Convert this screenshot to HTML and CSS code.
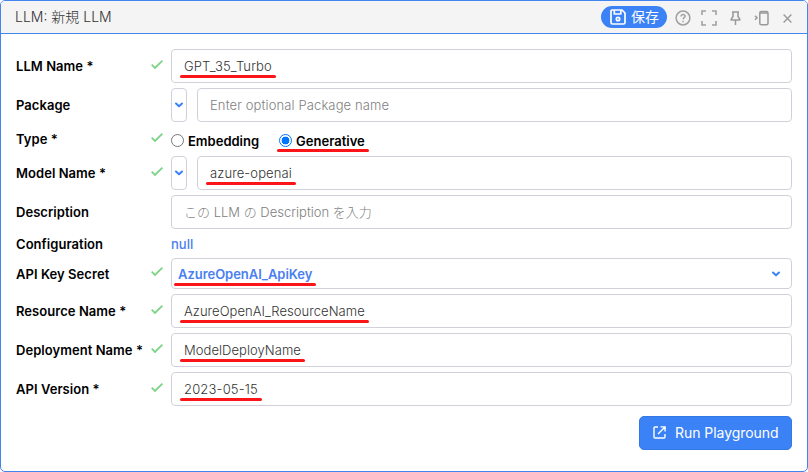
FILE: index.html
```html
<!DOCTYPE html>
<html lang="ja">
<head>
<meta charset="utf-8">
<title>LLM: 新規 LLM</title>
<link rel="stylesheet" href="styles.css">
</head>
<body>
<svg class="defs" aria-hidden="true">
  <symbol id="check" viewBox="0 0 12 9"><path d="M.7 4.7 4 8 11.4.7" fill="none" stroke="#7dd488" stroke-width="1.8"/></symbol>
  <symbol id="chevron" viewBox="0 0 8 6"><path d="M1 1.500 4 4.300 7 1.500" fill="none" stroke="currentColor" stroke-width="2" stroke-linecap="round" stroke-linejoin="round"/></symbol>
</svg>
<main class="panel">
  <header class="header">
    <h1 class="title">LLM: 新規 LLM</h1>
    <button class="save">
      <svg width="16" height="16" viewBox="0 0 16 16" fill="none" stroke="#fff" stroke-width="1.7" stroke-linejoin="round"><path d="M2 1h10l3 3v9.500a1.500 1.500 0 0 1-1.500 1.500h-11A1.500 1.500 0 0 1 1 13.500V2a1 1 0 0 1 1-1Z"/><path d="M4.300 1v4h6.500V1"/><circle cx="8" cy="10" r="1.700"/></svg>
      <span>保存</span>
    </button>
    <nav class="tools">
      <svg class="help" width="16" height="16" viewBox="0 0 16 16" fill="none" stroke="#a0a0a0" stroke-width="1.500"><circle cx="8" cy="8" r="6.900"/><path d="M6 6.500C6 3.700 10.200 4 10.100 6.300 10 7.700 8.100 7.600 8.100 9.300M8.100 10.700v1.500"/></svg>
      <svg class="expand" width="16" height="16" viewBox="0 0 16 16" fill="none" stroke="#a0a0a0" stroke-width="1.600"><path d="M1 5V1h4M11 1h4v4M15 11v4h-4M5 15H1v-4"/></svg>
      <svg class="pin" width="11" height="14" viewBox="0 0 11 14" fill="none" stroke="#999" stroke-width="1.500"><path d="M2 1h7M3 1v4.500L1.300 8v1h8.400V8L8 5.500V1M5.500 9v5"/></svg>
      <svg class="dock" width="15" height="16" viewBox="0 0 15 16" fill="none" stroke="#999" stroke-width="1.500"><path d="m1 5.800 2 2-2 2"/><rect x="5.800" y="1.500" width="8.200" height="13.300" rx="1.500"/><path d="M5.800 3h8.200"/></svg>
      <svg class="close" width="9" height="9" viewBox="0 0 9 9" fill="none" stroke="#999" stroke-width="1.400"><path d="m.6.600 7.800 7.800M8.400.6.600 8.400"/></svg>
    </nav>
  </header>
  <form class="form">
    <div class="row">
      <label class="label">LLM Name *</label><svg class="check"><use href="#check"/></svg>
      <div class="field"><span class="value mark">GPT_35_Turbo</span></div>
    </div>
    <div class="row">
      <label class="label">Package</label><span></span>
      <div class="combo"><div class="drop"><svg class="chev"><use href="#chevron"/></svg></div><div class="field"><span class="hint wide">Enter optional Package name</span></div></div>
    </div>
    <div class="row row-type">
      <label class="label">Type *</label><svg class="check"><use href="#check"/></svg>
      <div class="radios">
        <span class="option"><i class="radio"></i>Embedding</span>
        <span class="option mark chosen"><i class="radio on"></i>Generative</span>
      </div>
    </div>
    <div class="row">
      <label class="label">Model Name *</label><svg class="check"><use href="#check"/></svg>
      <div class="combo"><div class="drop"><svg class="chev"><use href="#chevron"/></svg></div><div class="field"><span class="value mark">azure-openai</span></div></div>
    </div>
    <div class="row">
      <label class="label">Description</label><span></span>
      <div class="field"><span class="hint">この LLM の Description を入力</span></div>
    </div>
    <div class="row row-config">
      <label class="label">Configuration</label><span></span>
      <span class="null">null</span>
    </div>
    <div class="row row-select">
      <label class="label">API Key Secret</label><svg class="check"><use href="#check"/></svg>
      <div class="field select"><span class="key mark">AzureOpenAI_ApiKey</span><svg class="chev"><use href="#chevron"/></svg></div>
    </div>
    <div class="row">
      <label class="label">Resource Name *</label><svg class="check"><use href="#check"/></svg>
      <div class="field"><span class="value mark tight">AzureOpenAI_ResourceName</span></div>
    </div>
    <div class="row">
      <label class="label">Deployment Name *</label><svg class="check"><use href="#check"/></svg>
      <div class="field"><span class="value mark tight">ModelDeployName</span></div>
    </div>
    <div class="row">
      <label class="label">API Version *</label><svg class="check"><use href="#check"/></svg>
      <div class="field"><span class="value mark wide">2023-05-15</span></div>
    </div>
    <button class="run" type="button">
      <svg width="13" height="13" viewBox="0 0 13 13" fill="none" stroke="#fff" stroke-width="1.400"><path d="M5 1H2a1 1 0 0 0-1 1v9a1 1 0 0 0 1 1h9a1 1 0 0 0 1-1V8M7.500.9h4.600v4.600M12 1 5 8"/></svg>
      <span>Run Playground</span>
    </button>
  </form>
</main>
</body>
</html>
```

FILE: styles.css
```css
* { box-sizing: border-box; }
body { margin: 0; background: #fff; color: #000; font: 13px/20px Inter, "Noto Sans CJK JP", sans-serif; }
button { font: inherit; cursor: pointer; }
.defs { display: none; }
.panel { height: 472px; border: 1px solid #4285ee; border-radius: 5px; overflow: hidden; }
.header { display: flex; align-items: center; height: 33px; padding: 0 15px 0 14px; background: #f4f4f4; border-bottom: 1px solid #4285ee; }
.title { margin: 0 auto 0 0; color: #333; font-size: 14px; font-weight: 300; white-space: nowrap; }
.save { display: flex; align-items: center; gap: 5px; width: 66px; height: 22px; padding: 0 0 0 9px; border: 0; border-radius: 11px; background: #3b82f6; color: #fff; font-size: 14px; white-space: nowrap; }
.save svg { flex: none; }
.tools { display: flex; align-items: center; padding: 2px 0 0 8px; }
.expand { margin-left: 10px; }
.pin { margin-left: 13px; }
.dock { margin-left: 13px; }
.close { margin-left: 14px; }
.form { display: flex; flex-direction: column; gap: 5px; padding: 15px; }
.row { display: grid; grid-template-columns: 135px 20px 621px; align-items: center; height: 34px; }
.label { font-weight: 600; letter-spacing: .05px; white-space: nowrap; }
.check { width: 12px; height: 9px; margin-top: -4px; }
.field { flex: 1; display: flex; align-items: center; height: 34px; padding: 0 12px; border: 1px solid #d1d1db; border-radius: 4px; background: #fff; }
.combo { display: flex; gap: 10px; }
.drop { display: flex; align-items: center; justify-content: center; width: 16px; height: 34px; border: 1px solid #d1d1db; border-radius: 4px; }
.chev { width: 8px; height: 6px; color: #3b82f6; }
.value, .hint { font-weight: 300; white-space: nowrap; }
.value { color: #333; letter-spacing: .1px; }
.hint { color: #808080; }
.value.tight { letter-spacing: .05px; }
.value.wide { letter-spacing: .18px; }
.hint.wide { letter-spacing: .12px; }
.row-type { height: 24px; }
.radios { display: flex; gap: 20px; padding-top: 3px; }
.option { display: flex; align-items: center; gap: 4px; font-weight: 600; }
.radio { width: 13px; height: 13px; border: 1px solid #767676; border-radius: 50%; }
.radio.on { border-color: #0075ff; background: radial-gradient(circle, #0075ff 0 3.600px, #fff 4.200px); }
.row-config { height: 19px; }
.null { color: #4a80f0; font-weight: 500; }
.row-select { height: 31px; }
.select { height: 31px; justify-content: space-between; padding: 0 11px 0 6px; }
.key { color: #4a80f0; font-weight: 600; letter-spacing: -.04px; }
.mark { position: relative; }
.mark::after { content: ""; position: absolute; left: -4px; right: -4px; bottom: -2px; height: 3px; border-radius: 2px; background: #fb1418; }
.chosen::after { left: -2px; right: -4px; bottom: -1px; }
.run { display: flex; align-items: center; gap: 9px; align-self: flex-end; width: 153px; height: 34px; margin-top: 5px; padding: 0 0 1px 13px; border: 1px solid #3478e5; border-radius: 5px; background: #3b82f6; color: #fff; font-size: 14px; letter-spacing: -.05px; white-space: nowrap; }
.run svg { flex: none; }
```
